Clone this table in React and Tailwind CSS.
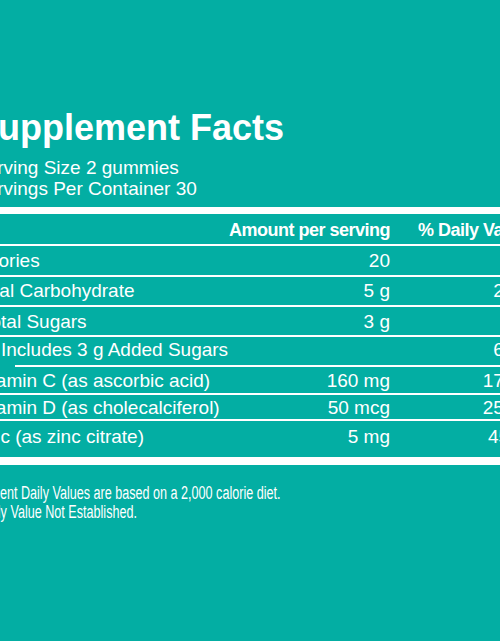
const rows = [
  { label: 'Calories', pad: '-ml-[4px]', amount: '20', dv: '', h: 'h-[29px]', rule: 'full' },
  { label: 'Total Carbohydrate', pad: 'pl-0', amount: '5 g', dv: '2%', h: 'h-[28px] pb-[2px]', rule: 'full' },
  { label: 'Total Sugars', pad: 'pl-[7px]', amount: '3 g', dv: '', h: 'h-[28px]', rule: 'full' },
  { label: 'Includes 3 g Added Sugars', pad: 'pl-[27px]', amount: '', dv: '6%', h: 'h-[28px] pb-[3px]', rule: 'indent' },
  { label: 'Vitamin C (as ascorbic acid)', pad: 'pl-0', amount: '160 mg', dv: '178%', h: 'h-[26px]', rule: 'full' },
  { label: 'Vitamin D (as cholecalciferol)', pad: 'pl-0', amount: '50 mcg', dv: '250%', h: 'h-[24px]', rule: 'full' },
  { label: 'Zinc (as zinc citrate)', pad: 'pl-0', amount: '5 mg', dv: '45%', h: 'h-[36px] pb-[5px]', rule: null },
]

function Row({ row }) {
  return (
    <>
      <div className={`flex items-center text-[19px] leading-none ${row.h}`}>
        <div className={`flex-1 ${row.pad}`}>{row.label}</div>
        <div className="w-[120px] text-right">{row.amount}</div>
        <div className="w-[234px] text-center">{row.dv}</div>
      </div>
      {row.rule === 'full' && <div className="h-[2px] bg-white" />}
      {row.rule === 'indent' && <div className="ml-[41px] h-[2px] bg-white" />}
    </>
  )
}

export default function App() {
  return (
    <div className="h-[641px] w-full overflow-hidden bg-[#03aea3] font-['Liberation_Sans',Arial,sans-serif] text-white">
      <div className="ml-[-26px] w-[650px] pt-[110px]">
        <h1 className="text-[36px] font-bold leading-none">Supplement Facts</h1>
        <div className="mt-[11px] text-[19px] leading-[21px]">
          <p>Serving Size 2 gummies</p>
          <p>Servings Per Container 30</p>
        </div>

        <div className="mt-[8px] h-[7px] bg-white" />
        <div className="flex h-[30px] items-center pt-[2px] text-[18px] font-bold leading-none tracking-[-0.5px]">
          <div className="flex-1" />
          <div className="w-[200px] text-right">Amount per serving</div>
          <div className="w-[234px] pl-[28px]">% Daily Value</div>
        </div>
        <div className="h-[2px] bg-white" />

        {rows.map((row) => (
          <Row key={row.label} row={row} />
        ))}

        <div className="h-[8px] bg-white" />

        <div className="mt-[19px] w-[600px] origin-left scale-x-[0.7] text-[18px] leading-[19px]">
          <p>Percent Daily Values are based on a 2,000 calorie diet.</p>
          <p>*Daily Value Not Established.</p>
        </div>
      </div>
    </div>
  )
}
